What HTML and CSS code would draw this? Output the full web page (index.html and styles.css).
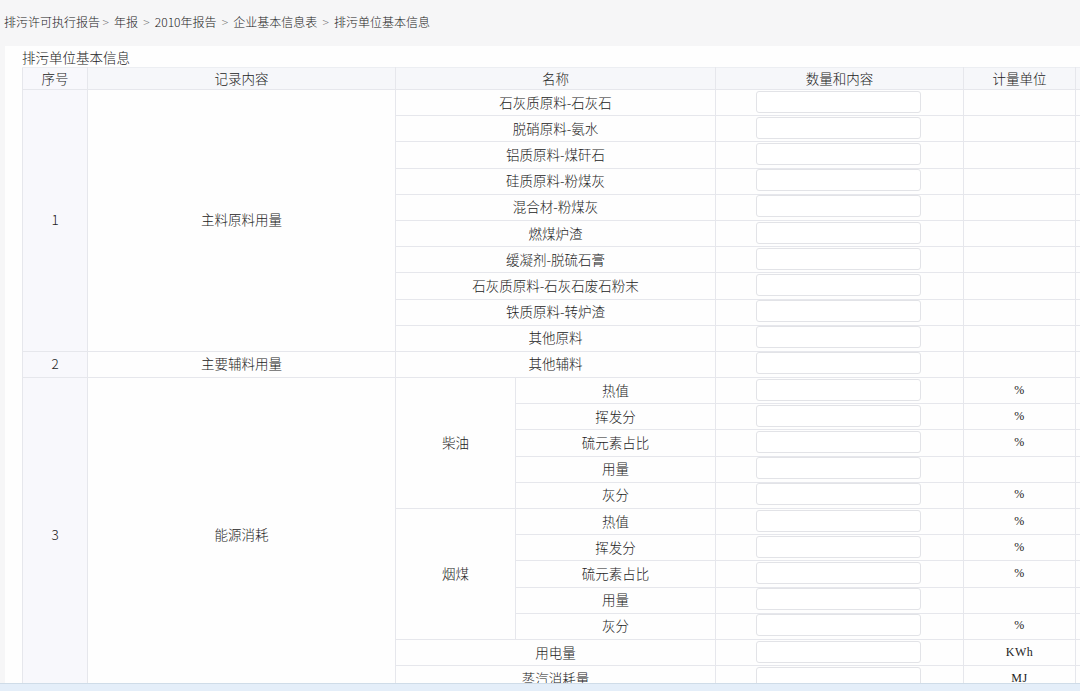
FILE: index.html
```html
<!DOCTYPE html>
<html lang="zh">
<head>
<meta charset="utf-8">
<link rel="stylesheet" href="styles.css">
</head>
<body>
<div class="crumbs">排污许可执行报告<span class="sep">&gt;</span> 年报 <span class="sep">&gt;</span> 2010年报告 <span class="sep">&gt;</span> 企业基本信息表 <span class="sep">&gt;</span> 排污单位基本信息</div>
<div class="panel">
  <div class="title">排污单位基本信息</div>
  <table class="grid">
    <colgroup>
      <col class="c1"><col class="c2"><col class="c3"><col class="c4"><col class="c5"><col class="c6"><col class="c7">
    </colgroup>
    <thead>
      <tr><th class="idx">序号</th><th>记录内容</th><th colspan="2">名称</th><th>数量和内容</th><th>计量单位</th><th></th></tr>
    </thead>
    <tbody>
      <tr><td class="idx" rowspan="10">1</td><td rowspan="10">主料原料用量</td><td colspan="2">石灰质原料-石灰石</td><td><span class="inp"></span></td><td class="u"></td><td></td></tr>
      <tr><td colspan="2">脱硝原料-氨水</td><td><span class="inp"></span></td><td class="u"></td><td></td></tr>
      <tr><td colspan="2">铝质原料-煤矸石</td><td><span class="inp"></span></td><td class="u"></td><td></td></tr>
      <tr><td colspan="2">硅质原料-粉煤灰</td><td><span class="inp"></span></td><td class="u"></td><td></td></tr>
      <tr><td colspan="2">混合材-粉煤灰</td><td><span class="inp"></span></td><td class="u"></td><td></td></tr>
      <tr><td colspan="2">燃煤炉渣</td><td><span class="inp"></span></td><td class="u"></td><td></td></tr>
      <tr><td colspan="2">缓凝剂-脱硫石膏</td><td><span class="inp"></span></td><td class="u"></td><td></td></tr>
      <tr><td colspan="2">石灰质原料-石灰石废石粉末</td><td><span class="inp"></span></td><td class="u"></td><td></td></tr>
      <tr><td colspan="2">铁质原料-转炉渣</td><td><span class="inp"></span></td><td class="u"></td><td></td></tr>
      <tr><td colspan="2">其他原料</td><td><span class="inp"></span></td><td class="u"></td><td></td></tr>
      <tr><td class="idx">2</td><td>主要辅料用量</td><td colspan="2">其他辅料</td><td><span class="inp"></span></td><td class="u"></td><td></td></tr>
      <tr><td class="idx" rowspan="12">3</td><td rowspan="12">能源消耗</td><td rowspan="5">柴油</td><td>热值</td><td><span class="inp"></span></td><td class="u">%</td><td></td></tr>
      <tr><td>挥发分</td><td><span class="inp"></span></td><td class="u">%</td><td></td></tr>
      <tr><td>硫元素占比</td><td><span class="inp"></span></td><td class="u">%</td><td></td></tr>
      <tr><td>用量</td><td><span class="inp"></span></td><td class="u"></td><td></td></tr>
      <tr><td>灰分</td><td><span class="inp"></span></td><td class="u">%</td><td></td></tr>
      <tr><td rowspan="5">烟煤</td><td>热值</td><td><span class="inp"></span></td><td class="u">%</td><td></td></tr>
      <tr><td>挥发分</td><td><span class="inp"></span></td><td class="u">%</td><td></td></tr>
      <tr><td>硫元素占比</td><td><span class="inp"></span></td><td class="u">%</td><td></td></tr>
      <tr><td>用量</td><td><span class="inp"></span></td><td class="u"></td><td></td></tr>
      <tr><td>灰分</td><td><span class="inp"></span></td><td class="u">%</td><td></td></tr>
      <tr><td colspan="2">用电量</td><td><span class="inp"></span></td><td class="u">KWh</td><td></td></tr>
      <tr><td colspan="2">蒸汽消耗量</td><td><span class="inp"></span></td><td class="u">MJ</td><td></td></tr>
    </tbody>
  </table>
</div>
<div class="footbar"></div>
</body>
</html>
```
FILE: styles.css
```css
html, body {
  margin: 0;
  padding: 0;
  width: 1080px;
  height: 691px;
  overflow: hidden;
  background: #f6f6f7;
  font-family: "Noto Sans CJK SC", "Noto Sans", sans-serif;
  font-weight: 300;
  color: #333;
}
.crumbs {
  height: 46px;
  line-height: 44px;
  padding-left: 4px;
  font-size: 12px;
  color: #222;
  white-space: nowrap;
}
.crumbs .sep {
  color: #777;
  margin: 0 2.5px;
}
.panel {
  margin-left: 5px;
  background: #fefefe;
  padding-left: 17px;
  padding-top: 3px;
  height: 700px;
}
.title {
  font-size: 13.5px;
  line-height: 16px;
  height: 18px;
  color: #222;
}
.grid {
  border-collapse: collapse;
  table-layout: fixed;
  width: 1160px;
  font-size: 13.5px;
}
.c1 { width: 65px; }
.c2 { width: 308px; }
.c3 { width: 120px; }
.c4 { width: 200px; }
.c5 { width: 248px; }
.c6 { width: 112px; }
.c7 { width: 107px; }
.grid th, .grid td {
  border: 1px solid #e6e7ec;
  padding: 0 0 2px 0;
  text-align: center;
  vertical-align: middle;
  font-weight: 300;
  white-space: nowrap;
  overflow: hidden;
  color: #222;
}
.grid thead tr { height: 22px; }
.grid th {
  background: #f6f7fa;
  font-size: 13.5px;
  line-height: 18px;
  border-top-color: #eceef2;
}
.grid tbody tr { height: 26.2px; }
.grid td { line-height: 18px; }
.grid td.idx, .grid th.idx {
  background: #f8f8fc;
}
.inp {
  display: block;
  width: 163px;
  height: 20px;
  margin-left: 40px;
  border: 1px solid #e2e3e7;
  border-radius: 3px;
  background: #fff;
}
.grid td.u {
  font-family: "Liberation Serif", "DejaVu Serif", serif;
  font-size: 12px;
  font-weight: normal;
  color: #222;
  letter-spacing: 0.5px;
}
.footbar {
  position: fixed;
  left: 0;
  right: 0;
  bottom: 0;
  height: 7px;
  background: #e4eef9;
  border-top: 1px solid #cfdce8;
}
```
